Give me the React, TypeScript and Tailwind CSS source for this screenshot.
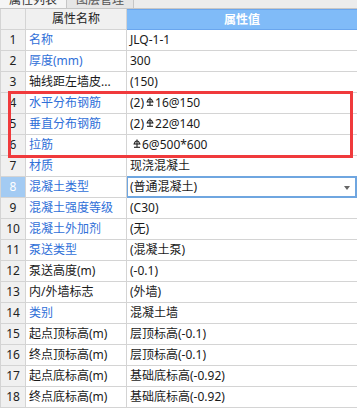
import React from "react";

type Row = { n: number; name: string; blue: boolean; value: React.ReactNode };

const Rebar = () => (
  <svg width="8" height="9" viewBox="0 0 8 9" className="inline-block align-[1px] ml-[2px] mr-[1px]" fill="none" stroke="#222" strokeWidth="1.1">
    <path d="M1.5 5 A2.5 3 0 0 1 6.5 5" />
    <line x1="0.5" y1="5" x2="7.5" y2="5" />
    <line x1="4" y1="0.5" x2="4" y2="8.3" />
    <line x1="1" y1="8.3" x2="7" y2="8.3" />
  </svg>
);

const rows: Row[] = [
  { n: 1, name: "名称", blue: true, value: "JLQ-1-1" },
  { n: 2, name: "厚度(mm)", blue: true, value: "300" },
  { n: 3, name: "轴线距左墙皮...", blue: false, value: "(150)" },
  { n: 4, name: "水平分布钢筋", blue: true, value: <>(2)<Rebar />16@150</> },
  { n: 5, name: "垂直分布钢筋", blue: true, value: <>(2)<Rebar />22@140</> },
  { n: 6, name: "拉筋", blue: true, value: <><span className="ml-[1px]" /><Rebar />6@500*600</> },
  { n: 7, name: "材质", blue: true, value: "现浇混凝土" },
  { n: 8, name: "混凝土类型", blue: true, value: "(普通混凝土)" },
  { n: 9, name: "混凝土强度等级", blue: true, value: "(C30)" },
  { n: 10, name: "混凝土外加剂", blue: true, value: "(无)" },
  { n: 11, name: "泵送类型", blue: true, value: "(混凝土泵)" },
  { n: 12, name: "泵送高度(m)", blue: false, value: "(-0.1)" },
  { n: 13, name: "内/外墙标志", blue: false, value: "(外墙)" },
  { n: 14, name: "类别", blue: true, value: "混凝土墙" },
  { n: 15, name: "起点顶标高(m)", blue: false, value: "层顶标高(-0.1)" },
  { n: 16, name: "终点顶标高(m)", blue: false, value: "层顶标高(-0.1)" },
  { n: 17, name: "起点底标高(m)", blue: false, value: "基础底标高(-0.92)" },
  { n: 18, name: "终点底标高(m)", blue: false, value: "基础底标高(-0.92)" },
];

export default function App() {
  return (
    <div
      className="relative w-[357px] h-[408px] overflow-hidden bg-white text-[12px] leading-none text-[#1a1a1a]"
      style={{ fontFamily: '"Noto Sans", "Noto Sans CJK SC", sans-serif' }}
    >
      {/* tab strip */}
      <div className="flex h-[9px] bg-[#ececec] border-b border-[#c6c6c6] overflow-hidden">
        <div className="w-[67px] bg-[#f5f5f5] border-r border-[#c6c6c6] flex items-end justify-center">
          <span className="text-[#333] mb-[2px] leading-[12px]">属性列表</span>
        </div>
        <div className="w-[67px] bg-[#e6e6e6] border-r border-[#c6c6c6] flex items-end justify-center">
          <span className="text-[#555] mb-[2px] leading-[12px]">图层管理</span>
        </div>
        <div className="flex-1" />
      </div>

      {/* header */}
      <div className="grid grid-cols-[26px_101px_1fr] h-[21px]">
        <div className="bg-[#f0f0f0] border-l border-r border-b border-[#d4d4d4]" />
        <div className="bg-[#f0f0f0] border-r border-b border-[#d4d4d4] flex items-center justify-center text-[#222]">
          属性名称
        </div>
        <div className="bg-[#80bbf8] border-y border-[#6aa6ee] flex items-center justify-center text-white font-bold">
          属性值
        </div>
      </div>

      {/* rows */}
      {rows.map((r) => {
        const sel = r.n === 8;
        return (
          <div key={r.n} className="grid grid-cols-[26px_101px_1fr] h-[21px]">
            <div
              className={
                "border-l border-r border-b border-[#d4d4d4] flex items-center justify-center " +
                (sel ? "bg-[#a3cbf3] text-white" : "bg-[#f0f0f0] text-[#222]")
              }
            >
              {r.n}
            </div>
            <div
              className={
                "border-r border-b border-[#d4d4d4] flex items-center pl-[3px] whitespace-nowrap overflow-hidden " +
                (r.blue ? "text-[#2f6fd8]" : "text-[#1a1a1a]")
              }
            >
              {r.name}
            </div>
            {sel ? (
              <div className="relative -mt-[1px] h-[22px] border-2 border-l-[1px] border-[#6fa6e0] flex items-center pl-[2px] whitespace-nowrap">
                {r.value}
                <span className="absolute right-[5px] top-[8px] w-0 h-0 border-l-[3px] border-r-[3px] border-t-[4px] border-l-transparent border-r-transparent border-t-[#666]" />
              </div>
            ) : (
              <div className="border-b border-[#d4d4d4] flex items-center pl-[3px] whitespace-nowrap">
                <span>{r.value}</span>
              </div>
            )}
          </div>
        );
      })}

      {/* red highlight box */}
      <div className="absolute left-[8px] top-[91px] w-[345px] h-[67px] border-[3px] border-[#f03a3c] pointer-events-none" />
    </div>
  );
}
